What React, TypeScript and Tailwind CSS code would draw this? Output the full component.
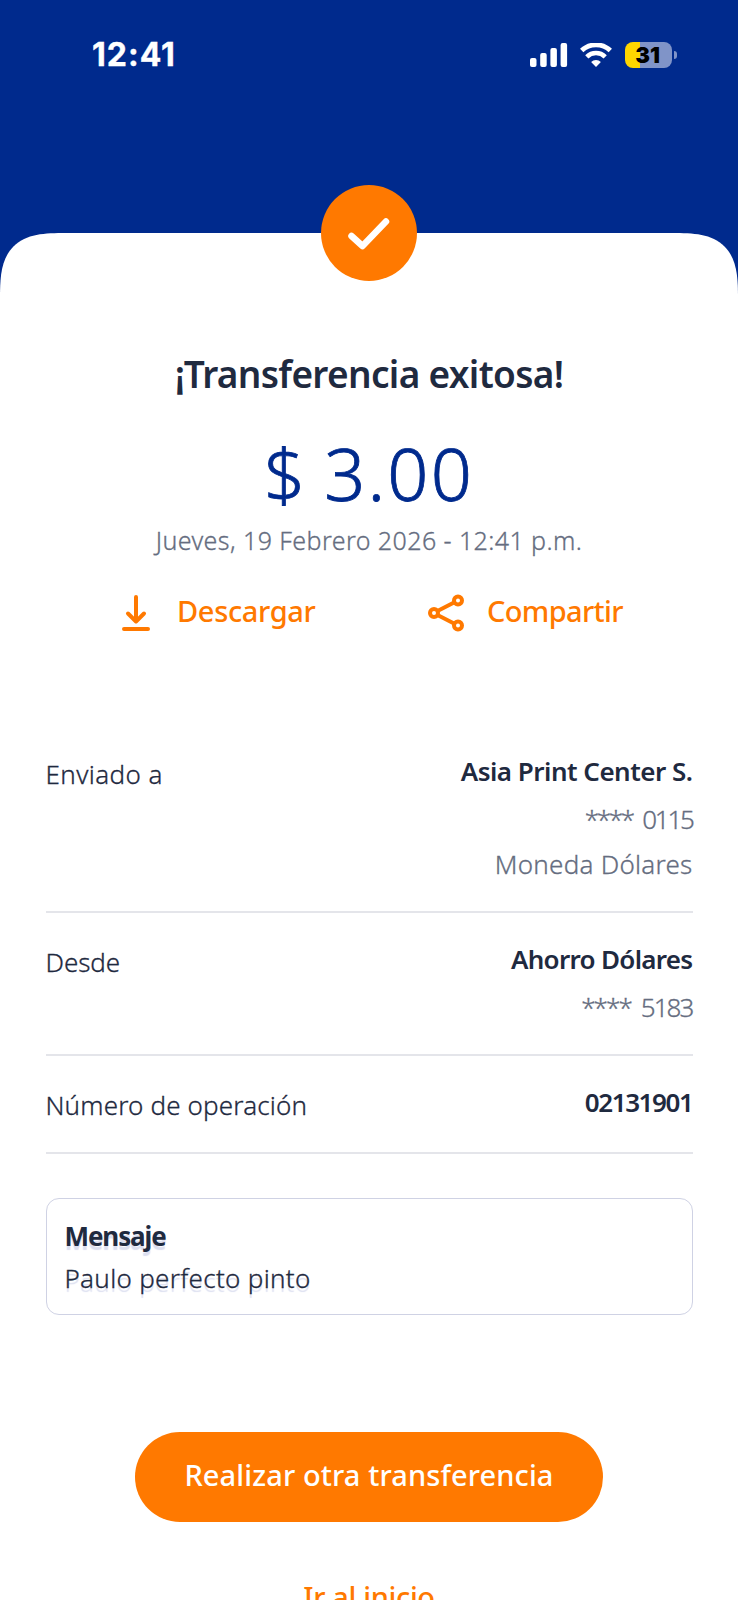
import type { ReactNode } from 'react'

interface Detail {
  label: string
  value: string
  extra: { text: string; className: string }[]
  labelClass: string
  valueClass: string
}

const details: Detail[] = [
  {
    label: 'Enviado a',
    value: 'Asia Print Center S.',
    extra: [
      { text: '**** 0115', className: 'tracking-[-2.3px] [word-spacing:5px]' },
      { text: 'Moneda Dólares', className: 'tracking-[0.25px]' },
    ],
    labelClass: 'tracking-[0.4px]',
    valueClass: 'tracking-[-0.5px]',
  },
  {
    label: 'Desde',
    value: 'Ahorro Dólares',
    extra: [{ text: '**** 5183', className: 'tracking-[-1.9px] [word-spacing:5px]' }],
    labelClass: 'tracking-[-0.1px]',
    valueClass: 'tracking-[-0.7px]',
  },
  {
    label: 'Número de operación',
    value: '02131901',
    extra: [],
    labelClass: 'tracking-[0.15px]',
    valueClass: 'tracking-[-1.4px]',
  },
]

function StatusBar() {
  return (
    <div className="flex h-[110px] shrink-0 items-center justify-between pl-[92px] pr-[61px] font-['Inter',sans-serif]">
      <span className="text-[32px] font-bold leading-8 tracking-[1px] text-white [-webkit-text-stroke:0.4px_#fff]">12:41</span>
      <div className="flex items-center">
        <svg width="38" height="24" viewBox="0 0 38 24" fill="#fff">
          <rect x="0" y="15" width="6.5" height="9" rx="2" />
          <rect x="10.2" y="10" width="6.5" height="14" rx="2" />
          <rect x="20.4" y="5" width="6.5" height="19" rx="2" />
          <rect x="30.6" y="0" width="6.5" height="24" rx="2" />
        </svg>
        <svg className="ml-3" width="32" height="24" viewBox="0 0 32 24" fill="none" stroke="#fff">
          <path d="M1.7 7.6a20.6 20.6 0 0 1 28.6 0" strokeWidth="4.8" />
          <path d="M6.8 13.8a13.2 13.2 0 0 1 18.4 0" strokeWidth="4.6" />
          <path d="M16 24l-4.9-4.9a7 7 0 0 1 9.8 0z" fill="#fff" stroke="none" />
        </svg>
        <div className="ml-[13px] flex h-[26px] w-[47px] items-center justify-center rounded-[8px] bg-[linear-gradient(90deg,#ffd600_15px,#8094c8_15px)]">
          <span className="pr-0.5 text-[22px] font-black leading-none tracking-[-0.2px] text-black">31</span>
        </div>
        <div className="ml-0.5 h-2 w-[3px] rounded-r-full bg-[#8094c8]" />
      </div>
    </div>
  )
}

function Action({ icon, children }: { icon: ReactNode; children: ReactNode }) {
  return (
    <button className="flex items-start text-[29px] font-medium leading-[42px] text-[#ff7900]">
      {icon}
      {children}
    </button>
  )
}

function DetailRow({ detail }: { detail: Detail }) {
  return (
    <div className="flex min-h-[98px] justify-between border-b-2 border-[#e4e5ea] pb-6 pt-[30px] text-[26px]">
      <span className={`mt-[3px] font-light leading-8 text-[#1f2a3f] [-webkit-text-stroke:0.3px] ${detail.labelClass}`}>{detail.label}</span>
      <div className="flex flex-col items-end">
        <span className={`font-semibold leading-8 text-[#1f2a3f] ${detail.valueClass}`}>{detail.value}</span>
        {detail.extra.length > 0 && (
          <div className="mt-2.5 flex flex-col items-end font-light leading-[45px] text-[#656d80] [-webkit-text-stroke:0.3px]">
            {detail.extra.map(line => (
              <span key={line.text} className={line.className}>{line.text}</span>
            ))}
          </div>
        )}
      </div>
    </div>
  )
}

export default function App() {
  return (
    <div className="flex h-[1600px] w-[738px] flex-col overflow-hidden bg-[#002a8d] font-['Noto_Sans',sans-serif]">
      <StatusBar />

      <main className="relative mt-[123px] flex min-h-0 flex-1 flex-col items-center rounded-t-[66px] bg-white pt-[117px] [corner-shape:superellipse(1.6)]">
        <div className="absolute -top-12 left-1/2 flex size-24 -translate-x-1/2 items-center justify-center rounded-full bg-[#ff7900]">
          <svg className="-ml-px mt-0.5" width="42" height="32" viewBox="0 0 42 32" fill="none" stroke="#fff" strokeWidth="6.5" strokeLinecap="round" strokeLinejoin="round">
            <path d="M3.5 18L14.5 28L38 3.5" />
          </svg>
        </div>

        <h1 className="whitespace-nowrap text-[37px] font-semibold leading-[48px] tracking-[-0.67px] text-[#1f2a3f]">¡Transferencia exitosa!</h1>
        <p className="mt-[35px] whitespace-nowrap text-[72px] font-light leading-[80px] tracking-[2.2px] text-[#002a8d] [-webkit-text-stroke:0.8px] [word-spacing:-4px]">$ 3.00</p>
        <p className="mt-[11px] whitespace-nowrap text-[25px] font-light leading-8 tracking-[0.42px] text-[#656d80] [-webkit-text-stroke:0.3px]">Jueves, 19 Febrero 2026 - 12:41 p.m.</p>

        <div className="mt-[34px] flex h-[44px] w-full shrink-0 pl-[122px]">
          <div className="w-[306px]">
            <Action
              icon={
                <svg className="mr-[26px] mt-1" width="29" height="38" viewBox="0 0 29 38" fill="none" stroke="currentColor" strokeWidth="4" strokeLinecap="round" strokeLinejoin="round">
                  <path d="M14 3v24M6 19.5l8 8 8-8M2 35h24" />
                </svg>
              }
            >
              <span className="tracking-[-0.35px]">Descargar</span>
            </Action>
          </div>
          <Action
            icon={
              <svg className="mr-[22px] mt-1" width="37" height="38" viewBox="0 0 37 38" fill="none" stroke="currentColor" strokeWidth="4">
                <circle cx="6" cy="19" r="4" />
                <circle cx="30" cy="6.5" r="4" />
                <circle cx="30" cy="31.5" r="4" />
                <path d="M9.5 17l17-8.7M9.5 21l17 8.7" />
              </svg>
            }
          >
            <span className="tracking-[-0.65px]">Compartir</span>
          </Action>
        </div>

        <section className="mt-[91px] w-[647px] shrink-0">
          {details.map(detail => (
            <DetailRow key={detail.label} detail={detail} />
          ))}

          <div className="mt-11 h-[117px] rounded-[13px] border-[1.5px] border-[#cfd2e4] px-[18px] pt-4 text-[26px] leading-[42px] text-[#1f2a3f] [text-shadow:0_4px_1px_#dcdff0]">
            <p><span className="font-bold tracking-[-1.1px]">Mensaje</span></p>
            <p className="font-light tracking-[0.3px] [-webkit-text-stroke:0.3px]"><span>Paulo perfecto pinto</span></p>
          </div>
        </section>

        <button className="mt-[117px] h-[90px] w-[468px] shrink-0 rounded-full bg-[#ff7900] pb-1 text-[29px] font-medium tracking-[0.12px] text-white">
          <span>Realizar otra transferencia</span>
        </button>
        <button className="mt-[55px] text-[29px] font-medium leading-10 tracking-[-0.35px] text-[#ff7900]"><span>Ir al inicio</span></button>
      </main>
    </div>
  )
}
